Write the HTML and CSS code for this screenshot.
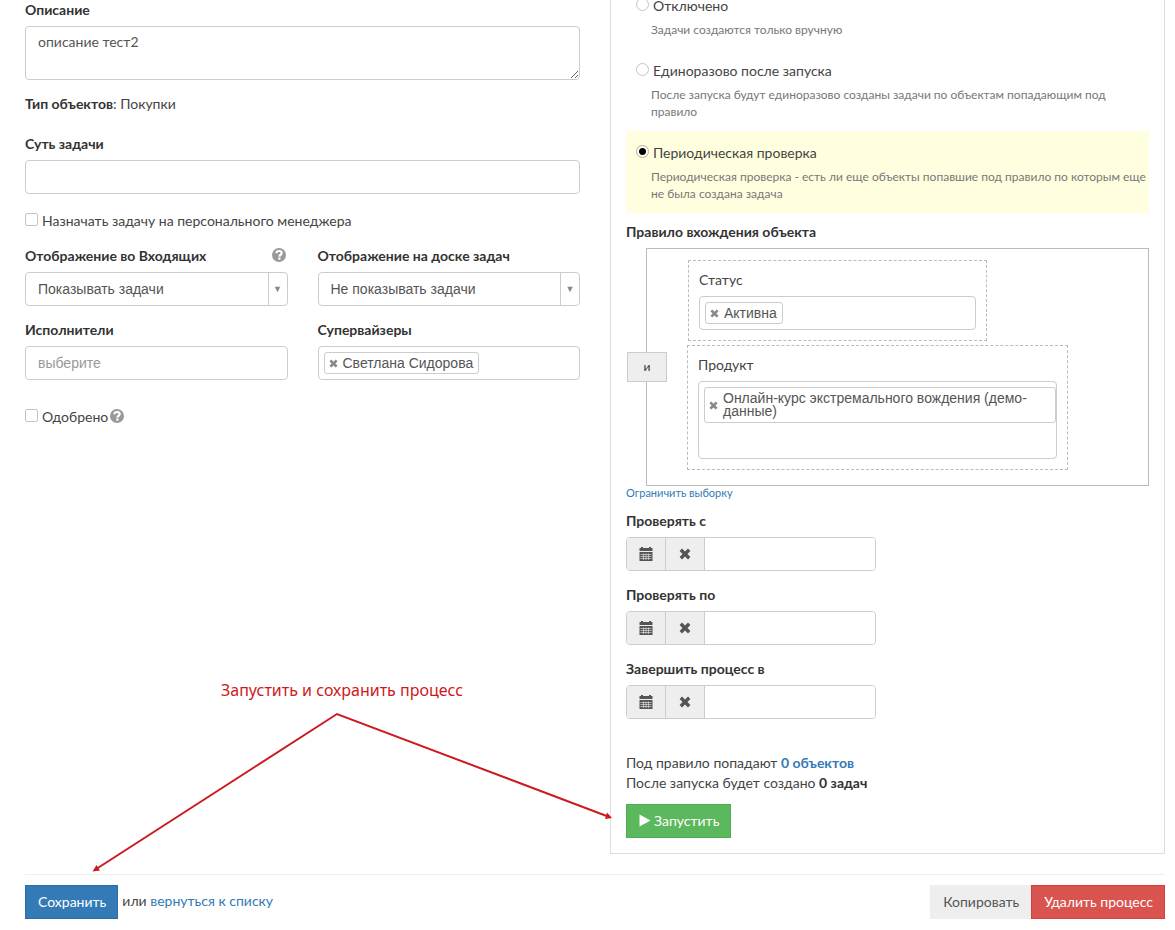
FILE: index.html
```html
<!DOCTYPE html>
<html lang="ru">
<head>
    <meta charset="UTF-8">
    <meta name="viewport" content="width=device-width, initial-scale=1.0">
    <title>Процесс</title>
    <link rel="stylesheet" href="styles.css">
</head>
<body>
    <svg class="sprite" aria-hidden="true">
        <symbol id="icon-help" viewBox="0 0 14 14">
            <circle cx="7" cy="7" r="7" fill="currentColor"/>
            <path d="M4.400 5.300C4.500 3.700 5.600 3 7.100 3c1.600 0 2.600.8 2.600 2.100C9.700 6.800 7.500 6.700 7.400 8.600" fill="none" stroke="#fff" stroke-width="2.200"/>
            <rect x="6.200" y="9.500" width="2.300" height="2.100" fill="#fff"/>
        </symbol>
        <symbol id="icon-remove" viewBox="0 0 12 12">
            <path d="M3 0.600 6 3.500 9 0.600 11.400 3 8.500 6 11.400 9 9 11.400 6 8.500 3 11.400 0.600 9 3.500 6 0.600 3Z" fill="currentColor"/>
        </symbol>
        <symbol id="icon-calendar" viewBox="0 0 14 14">
            <path d="M0.500 1H2V0H4V1H10V0H12V1H13.500V4H0.500Z" fill="currentColor"/>
            <path d="M0.500 5H13.500V14H0.500Z" fill="currentColor"/>
            <path d="M1.500 7.500H12.500M1.500 9.500H12.500M1.500 11.500H12.500M4.500 6.500V13M7 6.500V13M9.500 6.500V13" stroke="#eee" stroke-width="0.600"/>
        </symbol>
        <symbol id="icon-play" viewBox="0 0 12 13">
            <path d="M0.500 0.500 11.500 6.500 0.500 12.500Z" fill="currentColor"/>
        </symbol>
    </svg>

    <form class="page">
        <div class="columns">
            <div class="main-column">
                <div class="form-group">
                    <label for="description">Описание</label>
                    <textarea id="description" class="form-control">описание тест2</textarea>
                </div>

                <p class="object-type"><b>Тип объектов</b>: Покупки</p>

                <div class="form-group">
                    <label for="subject">Суть задачи</label>
                    <input type="text" id="subject" class="form-control">
                </div>

                <div class="checkbox">
                    <input type="checkbox" id="personal">
                    <label for="personal">Назначать задачу на персонального менеджера</label>
                </div>

                <div class="form-row">
                    <div class="form-group">
                        <div class="label-row">
                            <label for="inbox">Отображение во Входящих</label>
                            <svg class="icon-help"><use href="#icon-help"/></svg>
                        </div>
                        <div class="select">
                            <select id="inbox" class="form-control">
                                <option>Показывать задачи</option>
                            </select>
                        </div>
                    </div>
                    <div class="form-group">
                        <label for="board">Отображение на доске задач</label>
                        <div class="select">
                            <select id="board" class="form-control">
                                <option>Не показывать задачи</option>
                            </select>
                        </div>
                    </div>
                    <div class="form-group">
                        <label for="executors">Исполнители</label>
                        <input type="text" id="executors" class="form-control picker" placeholder="выберите">
                    </div>
                    <div class="form-group">
                        <label for="supervisors">Супервайзеры</label>
                        <div class="tags">
                            <span class="tag">
                                <button type="button" aria-label="Удалить"><svg><use href="#icon-remove"/></svg></button>
                                <span>Светлана Сидорова</span>
                            </span>
                            <input type="text" id="supervisors">
                        </div>
                    </div>
                </div>

                <div class="checkbox approved">
                    <input type="checkbox" id="approved">
                    <label for="approved">Одобрено</label>
                    <svg class="icon-help"><use href="#icon-help"/></svg>
                </div>
            </div>

            <div class="panel">
                <div class="option">
                    <div class="option-title">
                        <input type="radio" name="mode" id="modeOff">
                        <label for="modeOff">Отключено</label>
                    </div>
                    <p class="hint">Задачи создаются только вручную</p>
                </div>
                <div class="option">
                    <div class="option-title">
                        <input type="radio" name="mode" id="modeOnce">
                        <label for="modeOnce">Единоразово после запуска</label>
                    </div>
                    <p class="hint">После запуска будут единоразово созданы задачи по объектам попадающим под правило</p>
                </div>
                <div class="option active">
                    <div class="option-title">
                        <input type="radio" name="mode" id="modePeriodic" checked>
                        <label for="modePeriodic">Периодическая проверка</label>
                    </div>
                    <p class="hint">Периодическая проверка - есть ли еще объекты попавшие под правило по которым еще не была создана задача</p>
                </div>

                <h4 class="rule-title">Правило вхождения объекта</h4>
                <div class="rule">
                    <button type="button" class="rule-operator">и</button>
                    <div class="condition condition-status">
                        <label for="status">Статус</label>
                        <div class="tags">
                            <span class="tag">
                                <button type="button" aria-label="Удалить"><svg><use href="#icon-remove"/></svg></button>
                                <span>Активна</span>
                            </span>
                            <input type="text" id="status">
                        </div>
                    </div>
                    <div class="condition condition-product">
                        <label for="product">Продукт</label>
                        <div class="tags tags-wrap">
                            <span class="tag tag-long">
                                <button type="button" aria-label="Удалить"><svg><use href="#icon-remove"/></svg></button>
                                <span>Онлайн-курс экстремального вождения (демо-данные)</span>
                            </span>
                            <input type="text" id="product">
                        </div>
                    </div>
                </div>
                <a href="#" class="limit-link">Ограничить выборку</a>

                <div class="form-group">
                    <label for="checkFrom">Проверять с</label>
                    <div class="input-group">
                        <button type="button" aria-label="Календарь"><svg><use href="#icon-calendar"/></svg></button>
                        <button type="button" aria-label="Очистить"><svg><use href="#icon-remove"/></svg></button>
                        <input type="text" id="checkFrom">
                    </div>
                </div>
                <div class="form-group">
                    <label for="checkTo">Проверять по</label>
                    <div class="input-group">
                        <button type="button" aria-label="Календарь"><svg><use href="#icon-calendar"/></svg></button>
                        <button type="button" aria-label="Очистить"><svg><use href="#icon-remove"/></svg></button>
                        <input type="text" id="checkTo">
                    </div>
                </div>
                <div class="form-group">
                    <label for="finishAt">Завершить процесс в</label>
                    <div class="input-group">
                        <button type="button" aria-label="Календарь"><svg><use href="#icon-calendar"/></svg></button>
                        <button type="button" aria-label="Очистить"><svg><use href="#icon-remove"/></svg></button>
                        <input type="text" id="finishAt">
                    </div>
                </div>

                <p class="summary">
                    Под правило попадают <a href="#"><b>0 объектов</b></a><br>
                    После запуска будет создано <b>0 задач</b>
                </p>
                <button type="button" class="btn btn-success"><svg><use href="#icon-play"/></svg>Запустить</button>
            </div>
        </div>

        <div class="footer">
            <button type="submit" class="btn btn-primary">Сохранить</button>
            <span>или <a href="#">вернуться к списку</a></span>
            <div class="footer-right">
                <button type="button" class="btn btn-default">Копировать</button>
                <button type="button" class="btn btn-danger">Удалить процесс</button>
            </div>
        </div>
    </form>

    <!-- callout over the form -->
    <div class="callout">Запустить и сохранить процесс</div>
    <svg class="arrows" width="620" height="880" viewBox="0 0 620 880" aria-hidden="true">
        <path d="M97 868.500 337 714 608 816.500" fill="none" stroke="#cc1a22" stroke-width="2"/>
        <path d="M92.500 871.500 96.500 865 100 870.500ZM612 818 605 819 607 812.500Z" fill="#cc1a22"/>
    </svg>
</body>
</html>
```

FILE: styles.css
```css
* {
    box-sizing: border-box;
}

body {
    margin: 0;
    font-family: Lato, "Open Sans", sans-serif;
    font-size: 14px;
    line-height: 20px;
    color: #444;
    background-color: #fff;
    position: relative;
}

input,
select,
textarea,
button {
    font-family: inherit;
    font-size: 14px;
    line-height: 20px;
    color: #555;
    margin: 0;
}

a {
    color: #337ab7;
    text-decoration: none;
}

p {
    margin: 0;
}

b {
    color: #333;
}

a b {
    color: inherit;
}

.sprite {
    display: none;
}

.page {
    padding: 0 10px 0 25px;
}

.columns {
    display: grid;
    grid-template-columns: 1fr 1fr;
    gap: 30px;
}

/* form controls */
.form-group {
    margin-bottom: 14px;
}

.form-group label {
    display: block;
    margin-bottom: 6px;
    font-weight: bold;
    color: #333;
}

.form-control {
    display: block;
    width: 100%;
    height: 34px;
    padding: 6px 12px;
    border: 1px solid #ccc;
    border-radius: 4px;
    background-color: #fff;
}

textarea.form-control {
    height: 54px;
    padding-top: 5px;
    resize: vertical;
}

.picker,
.select select,
.tags {
    font-family: "Liberation Sans", Arial, sans-serif;
}

.picker::placeholder {
    color: #999;
}

.select {
    position: relative;
}

.select select {
    appearance: none;
}

.select::after {
    content: "▼";
    position: absolute;
    top: 1px;
    right: 1px;
    bottom: 1px;
    width: 18px;
    border-left: 1px solid #ccc;
    color: #888;
    font-size: 9px;
    line-height: 32px;
    text-align: center;
    pointer-events: none;
}

.tags {
    display: flex;
    min-height: 34px;
    padding: 5px;
    border: 1px solid #ccc;
    border-radius: 4px;
    background-color: #fff;
}

.tags input {
    flex: 1;
    min-width: 0;
    width: 20px;
    height: 20px;
    padding: 0;
    border: 0;
    outline: none;
}

.tag {
    display: flex;
    align-items: center;
    gap: 5px;
    padding: 0 5px 0 4px;
    border: 1px solid #ccc;
    border-radius: 3px;
    color: #555;
    line-height: 20px;
    white-space: nowrap;
}

.tag button {
    display: flex;
    padding: 0;
    border: 0;
    background: none;
    color: #888;
}

.tag svg {
    width: 9px;
    height: 9px;
}

.main-column > .form-group {
    margin-bottom: 14px;
}

.object-type {
    margin-bottom: 20px;
}

.checkbox {
    display: flex;
    align-items: center;
    gap: 4px;
    margin: 17px 0 15px;
}

.checkbox input,
.option-title input {
    appearance: none;
    width: 13px;
    height: 13px;
    margin-bottom: 3px;
    border: 1px solid #c4c4c4;
    border-radius: 2px;
    background-color: #fff;
}

.form-row {
    display: grid;
    grid-template-columns: 1fr 1fr;
    column-gap: 30px;
}

.label-row {
    display: flex;
    justify-content: space-between;
}

.icon-help {
    width: 14px;
    height: 14px;
    margin: 2px;
    color: #999;
}

.approved {
    margin-top: 13px;
}

.approved .icon-help {
    margin: 0 0 2px -2px;
}

/* launch settings */
.panel {
    margin-top: -16px;
    padding: 0 15px 15px;
    border: 1px solid #ddd;
    border-top: 0;
}

.option {
    padding: 12px 0 11px 10px;
}

.option.active {
    background-color: #ffffdf;
}

.option-title {
    display: flex;
    align-items: center;
    gap: 4px;
    margin-bottom: 5px;
}

.option-title input {
    border-radius: 50%;
}

.option-title input:checked {
    border-color: #b8ab8c;
    background: radial-gradient(circle, #000 3px, #fff 4px);
}

.hint {
    padding-left: 15px;
    color: #777;
    font-size: 12px;
    line-height: 17px;
}

.rule-title {
    margin: 9px 0 6px;
    font-size: 14px;
    color: #333;
}

.rule {
    position: relative;
    margin-left: 20px;
    padding: 11px 40px 15px;
    border: 1px solid #bbb;
}

.rule-operator {
    position: absolute;
    top: 50%;
    left: -20px;
    width: 40px;
    height: 30px;
    padding: 0;
    border: 1px solid #ccc;
    background-color: #eee;
    color: #333;
    font-size: 12px;
    transform: translateY(-50%);
}

.condition {
    max-width: 100%;
    padding: 9px 10px 10px;
    border: 1px dashed #bbb;
}

.condition label {
    display: block;
    margin-bottom: 6px;
}

.condition-status {
    width: 299px;
    margin: 0 0 4px 1px;
}

.condition-product {
    width: 381px;
}

.tags-wrap {
    display: block;
    min-height: 78px;
    padding-right: 0;
}

.tags-wrap input {
    display: block;
    width: 100%;
}

.tag-long {
    padding: 4px 5px 4px 4px;
    line-height: 13px;
    white-space: normal;
}

.limit-link {
    display: block;
    margin-bottom: 11px;
    font-size: 11px;
    line-height: 14px;
}

.input-group {
    display: flex;
    width: 250px;
    height: 34px;
    border: 1px solid #ccc;
    border-radius: 4px;
    overflow: hidden;
}

.input-group button {
    display: flex;
    align-items: center;
    justify-content: center;
    width: 39px;
    padding: 0;
    border: 0;
    border-right: 1px solid #ccc;
    background-color: #eee;
}

.input-group svg {
    width: 14px;
    height: 14px;
}

.input-group button + button svg {
    width: 12px;
    height: 12px;
}

.input-group input {
    flex: 1;
    min-width: 0;
    padding: 6px 12px;
    border: 0;
}

.summary {
    margin: 34px 0 11px;
}

/* buttons */
.btn {
    display: inline-flex;
    align-items: center;
    gap: 3px;
    height: 34px;
    padding: 0 11px 1px 12px;
    border: 1px solid transparent;
    color: #fff;
    white-space: nowrap;
    cursor: pointer;
}

.btn svg {
    width: 12px;
    height: 13px;
}

.btn-success {
    background-color: #5cb85c;
    border-color: #4cae4c;
}

.btn-primary {
    background-color: #337ab7;
    border-color: #2e6da4;
}

.btn-default {
    background-color: #eee;
    color: #555;
}

.btn-danger {
    background-color: #d9534f;
    border-color: #d43f3a;
}

.footer {
    display: flex;
    align-items: center;
    gap: 4px;
    margin-top: 20px;
    padding: 10px 0;
    border-top: 1px solid #eee;
}

.footer > span {
    padding-bottom: 2px;
}

.footer-right {
    display: flex;
    margin-left: auto;
}

/* callout */
.callout {
    position: absolute;
    top: 680px;
    left: 221px;
    color: #cc1a22;
    font-family: "Noto Sans", sans-serif;
    font-size: 16px;
}

.arrows {
    position: absolute;
    top: 0;
    left: 0;
    pointer-events: none;
}
```
